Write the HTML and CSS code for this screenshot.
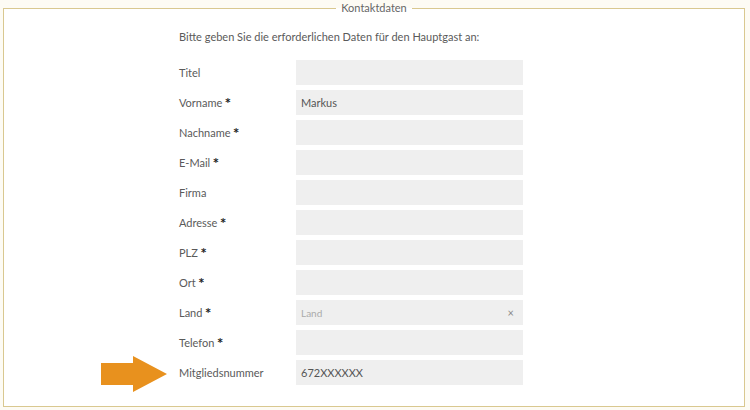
FILE: index.html
```html
<!DOCTYPE html>
<html lang="de">
<head>
<meta charset="utf-8">
<link rel="stylesheet" href="styles.css">
</head>
<body>
<fieldset class="box">
  <legend class="legend">Kontaktdaten</legend>
  <div class="inner">
    <p class="intro">Bitte geben Sie die erforderlichen Daten für den Hauptgast an:</p>
    <div class="form">
      <div class="label">Titel</div><div class="field"></div>
      <div class="label">Vorname <b>*</b></div><div class="field">Markus</div>
      <div class="label">Nachname <b>*</b></div><div class="field"></div>
      <div class="label">E-Mail <b>*</b></div><div class="field"></div>
      <div class="label">Firma</div><div class="field"></div>
      <div class="label">Adresse <b>*</b></div><div class="field"></div>
      <div class="label">PLZ <b>*</b></div><div class="field"></div>
      <div class="label">Ort <b>*</b></div><div class="field"></div>
      <div class="label">Land <b>*</b></div><div class="field select"><span class="ph">Land</span><span class="clear">×</span></div>
      <div class="label">Telefon <b>*</b></div><div class="field"></div>
      <div class="label member">Mitgliedsnummer
        <svg class="arrow" width="66" height="36" viewBox="0 0 66 36"><path d="M0 7 H32 V0 L66 18 L32 36 V29 H0 Z" fill="#e8911e"/></svg>
      </div><div class="field">672XXXXXX</div>
    </div>
  </div>
</fieldset>
</body>
</html>
```
FILE: styles.css
```css
html, body { margin: 0; padding: 0; }
body {
  background: #fdfbf4;
  font-family: Lato, "Open Sans", sans-serif;
  color: #5a5a5a;
  font-size: 11px;
  width: 750px;
  height: 410px;
  overflow: hidden;
}
.box {
  margin: 2px 5px 0 3px;
  height: 405px;
  box-sizing: border-box;
  border: 1px solid #d9c890;
  background: #fff;
  padding: 0;
}
.legend {
  margin: 0 auto;
  padding: 0 5px;
  font-size: 11px;
  color: #666;
  line-height: 12px;
}
.inner { padding-left: 175px; }
.intro {
  margin: 16px 0 16px 0;
  font-size: 11px;
  line-height: 14px;
}
.form {
  display: grid;
  grid-template-columns: 117px 227px;
  grid-auto-rows: 25px;
  row-gap: 5px;
}
.label {
  display: flex;
  align-items: center;
  font-size: 11px;
  color: #5a5a5a;
}
.label b {
  color: #222;
  margin-left: 3px;
  font-weight: 700;
  font-family: "DejaVu Sans", sans-serif;
  font-size: 10px;
}
.member { position: relative; }
.arrow { position: absolute; left: -78px; top: -4px; }
.field {
  background: #efefef;
  display: flex;
  align-items: center;
  padding: 0 5px;
  font-size: 11px;
  color: #555;
}
.select { justify-content: space-between; padding-right: 9px; }
.ph { color: #aaa; font-size: 10px; }
.clear { color: #888; font-size: 11px; }
```
